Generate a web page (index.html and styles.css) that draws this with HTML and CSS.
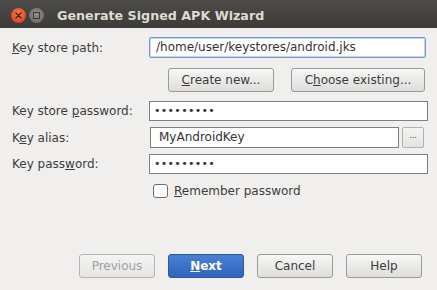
FILE: index.html
```html
<!DOCTYPE html>
<html>
<head>
<meta charset="utf-8">
<link rel="stylesheet" href="styles.css">
</head>
<body>
<div class="window">
  <div class="titlebar">
    <span class="wbtn close"><svg width="15" height="15" viewBox="0 0 15 15"><path d="M5 5 L10 10 M10 5 L5 10" stroke="#4a1a0a" stroke-width="1.3" stroke-linecap="round"/></svg></span>
    <span class="wbtn max"><svg width="15" height="15" viewBox="0 0 15 15"><rect x="4.5" y="4.5" width="6" height="6" fill="none" stroke="#3a3a38" stroke-width="1"/></svg></span>
    <span class="title">Generate Signed APK Wizard</span>
  </div>
  <div class="content">
    <div class="row r1">
      <label class="lbl"><u>K</u>ey store path:</label>
      <div class="field focus">/home/user/keystores/android.jks</div>
    </div>
    <div class="btnrow">
      <button class="btn create"><u>C</u>reate new...</button>
      <button class="btn choose">C<u>h</u>oose existing...</button>
    </div>
    <div class="row r3">
      <label class="lbl">Key store <u>p</u>assword:</label>
      <div class="field pw">•••••••••</div>
    </div>
    <div class="row r4">
      <label class="lbl">K<u>e</u>y alias:</label>
      <div class="field alias">MyAndroidKey</div>
      <button class="dots">...</button>
    </div>
    <div class="row r5">
      <label class="lbl">Key pass<u>w</u>ord:</label>
      <div class="field pw">•••••••••</div>
    </div>
    <div class="check">
      <span class="box"></span>
      <span class="clbl"><u>R</u>emember password</span>
    </div>
  </div>
  <div class="footer">
    <button class="btn fbtn disabled">Previous</button>
    <button class="btn fbtn primary"><u>N</u>ext</button>
    <button class="btn fbtn cancel">Cancel</button>
    <button class="btn fbtn">Help</button>
  </div>
</div>
</body>
</html>
```

FILE: styles.css
```css
html, body {
  margin: 0;
  padding: 0;
  height: 100%;
}
body {
  background: #f0efee;
  font-family: "DejaVu Sans", sans-serif;
  font-size: 12px;
  color: #3c3c3c;
}
.window {
  height: 290px;
  display: flex;
  flex-direction: column;
}
.titlebar {
  height: 28px;
  flex: none;
  background: linear-gradient(#4d4c48, #3c3b37);
  display: flex;
  align-items: center;
  padding-left: 11px;
  box-sizing: border-box;
  padding-top: 3px;
}
.wbtn {
  width: 15px;
  height: 15px;
  border-radius: 50%;
  display: flex;
  margin-right: 3px;
}
.close {
  background: radial-gradient(circle at 50% 40%, #f5825a, #e0481e 70%, #b83a18);
}
.max {
  background: radial-gradient(circle at 50% 40%, #8f8e8a, #6f6e6a 75%, #5a5955);
}
.title {
  margin-left: 10px;
  font-weight: bold;
  font-size: 12.7px;
  color: #dfdbd2;
}
.content {
  padding: 9px 11px 0 12px;
  display: flex;
  flex-direction: column;
}
.row {
  display: flex;
  align-items: center;
}
.lbl {
  width: 136px;
  flex: none;
}
.field {
  flex: 1;
  height: 20px;
  box-sizing: border-box;
  border: 1px solid #7f7f7f;
  background: #fff;
  padding-left: 6px;
  line-height: 18px;
  color: #333;
  white-space: nowrap;
  overflow: hidden;
}
.field.focus {
  height: 21px;
  border: 1px solid #6f98d4;
  border-radius: 2px;
  box-shadow: inset 0 0 0 1px #c3d5ef;
  margin-left: 1px;
}
.pw {
  font-size: 11px;
  letter-spacing: 0.3px;
  padding-left: 4px;
}
.btnrow {
  display: flex;
  justify-content: flex-end;
  gap: 17px;
  margin-top: 10px;
  padding-right: 1px;
}
.btn {
  font-family: "DejaVu Sans", sans-serif;
  font-size: 12px;
  color: #3c3c3c;
  height: 24px;
  box-sizing: border-box;
  border: 1px solid #9a9a9a;
  border-radius: 3px;
  background: linear-gradient(#f7f7f6, #dedddb);
  padding: 0;
}
.create { width: 106px; }
.choose { width: 134px; }
.r3 { margin-top: 9px; }
.r4 { margin-top: 6px; }
.r5 { margin-top: 6px; }
.r4 .field { height: 21px; margin-left: 2px; line-height: 19px; padding-left: 8px; }
.dots {
  width: 22px;
  height: 21px;
  margin-left: 3px;
  margin-right: 2px;
  box-sizing: border-box;
  border: 1px solid #b0b0b0;
  border-radius: 2px;
  background: linear-gradient(#f4f4f3, #e4e3e1);
  font-size: 8px;
  padding: 0 0 4px;
  color: #444;
  font-family: "DejaVu Sans", sans-serif;
}
.r5 .field, .r3 .field { margin-left: 1px; margin-right: -2px; }
.check {
  display: flex;
  align-items: center;
  margin-top: 10px;
  margin-left: 141px;
}
.box {
  width: 15px;
  height: 14px;
  box-sizing: border-box;
  border: 1px solid #6d6d6d;
  border-radius: 3px;
  background: #fff;
  margin-right: 6px;
}
.footer {
  margin-top: auto;
  display: flex;
  justify-content: flex-end;
  gap: 13px;
  padding: 0 15px 12px 0;
}
.fbtn {
  width: 76px;
  height: 24px;
}
.fbtn.cancel { width: 76px; }
.disabled {
  color: #a0a0a0;
  border-color: #b5b5b5;
  background: linear-gradient(#f4f4f3, #e6e5e3);
}
.primary {
  background: linear-gradient(#4a80d4, #2f63bd);
  border-color: #2c57a0;
  color: #fff;
  font-weight: bold;
}
```
